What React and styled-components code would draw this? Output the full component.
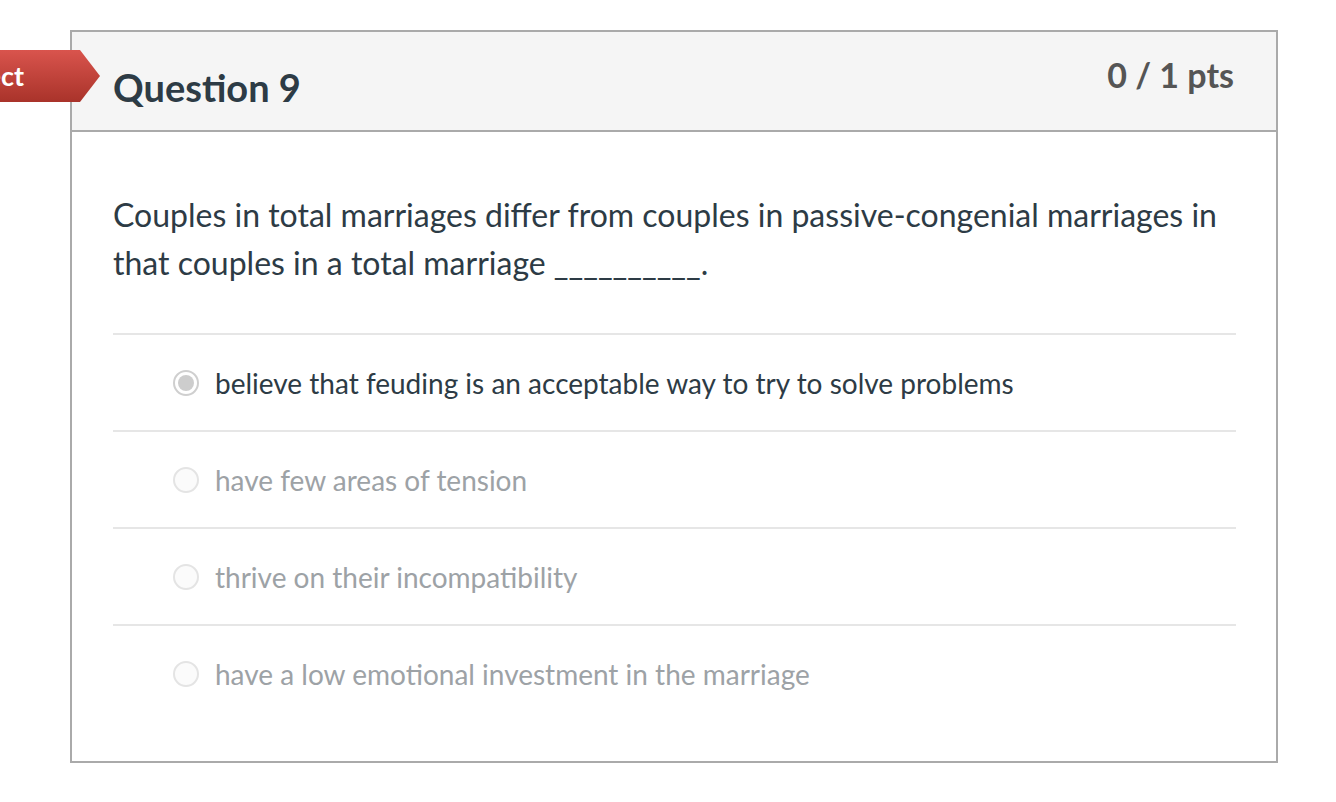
import React from "react";
import styled, { createGlobalStyle } from "styled-components";

const GlobalStyle = createGlobalStyle`
  html, body {
    margin: 0;
    padding: 0;
    background: #fff;
    overflow: hidden;
  }
  body {
    font-family: Lato, "Open Sans", "Liberation Sans", sans-serif;
    color: #2d3b45;
  }
`;

const answers = [
  { text: "believe that feuding is an acceptable way to try to solve problems", selected: true },
  { text: "have few areas of tension" },
  { text: "thrive on their incompatibility" },
  { text: "have a low emotional investment in the marriage" },
];

const App = () => {
  return (
    <Page>
      <GlobalStyle />
      <Banner>
        <span>Incorrect</span>
      </Banner>
      <Card>
        <Header>
          <Title>Question 9</Title>
          <Points>0 / 1 pts</Points>
        </Header>
        <Body>
          <QuestionText>
            Couples in total marriages differ from couples in passive-congenial marriages in
            that couples in a total marriage __________.
          </QuestionText>
          <AnswerList>
            {answers.map((a) => (
              <AnswerRow key={a.text}>
                <Radio selected={a.selected} />
                <AnswerText selected={a.selected}>{a.text}</AnswerText>
              </AnswerRow>
            ))}
          </AnswerList>
        </Body>
      </Card>
    </Page>
  );
};

const Page = styled.div`
  position: relative;
  width: 1336px;
  height: 802px;
  padding: 30px 0 0 70px;
  box-sizing: border-box;
`;

const Banner = styled.div`
  position: absolute;
  left: 0;
  top: 50px;
  width: 100px;
  height: 52px;
  display: flex;
  align-items: center;
  justify-content: flex-end;
  padding-right: 76px;
  box-sizing: border-box;
  overflow: hidden;
  white-space: nowrap;
  background: linear-gradient(#d9544d, #a9332a);
  clip-path: polygon(0 0, 80px 0, 100px 50%, 80px 100%, 0 100%);
  z-index: 2;

  span {
    color: #fff;
    font-size: 27px;
    font-weight: 700;
    line-height: 1;
    margin-top: -1px;
  }
`;

const Card = styled.div`
  width: 1208px;
  height: 733px;
  box-sizing: border-box;
  border: 2px solid #aaaaaa;
  background: #fff;
`;

const Header = styled.div`
  height: 100px;
  box-sizing: border-box;
  background: #f5f5f5;
  border-bottom: 2px solid #aaaaaa;
  display: flex;
  justify-content: space-between;
  align-items: flex-start;
  padding: 0 42px 0 41px;
`;

const Title = styled.h2`
  margin: 36px 0 0;
  font-size: 38px;
  line-height: 38px;
  font-weight: 700;
  color: #2d3b45;
`;

const Points = styled.div`
  margin-top: 26px;
  font-size: 34px;
  line-height: 34px;
  font-weight: 700;
  color: #555555;
`;

const Body = styled.div`
  padding: 59px 40px 0 41px;
`;

const QuestionText = styled.p`
  margin: 0 0 46px;
  font-size: 32px;
  line-height: 48px;
  color: #2d3b45;
`;

const AnswerList = styled.div`
  display: flex;
  flex-direction: column;
`;

const AnswerRow = styled.div`
  height: 97px;
  box-sizing: border-box;
  border-top: 2px solid #e6e6e6;
  display: flex;
  align-items: center;
  padding-left: 60px;
  gap: 16px;
`;

const Radio = styled.span`
  position: relative;
  width: 26px;
  height: 26px;
  box-sizing: border-box;
  border-radius: 50%;
  border: 2px solid ${(p) => (p.selected ? "#cfcfcf" : "#e4e4e4")};
  background: ${(p) => (p.selected ? "#fff" : "#fbfbfb")};
  flex-shrink: 0;

  &::after {
    content: "";
    display: ${(p) => (p.selected ? "block" : "none")};
    position: absolute;
    left: 3px;
    top: 3px;
    width: 16px;
    height: 16px;
    border-radius: 50%;
    background: #cdcdcd;
  }
`;

const AnswerText = styled.span`
  font-size: 28px;
  line-height: 34px;
  color: ${(p) => (p.selected ? "#2d3b45" : "#9da2a6")};
`;

export default App;
